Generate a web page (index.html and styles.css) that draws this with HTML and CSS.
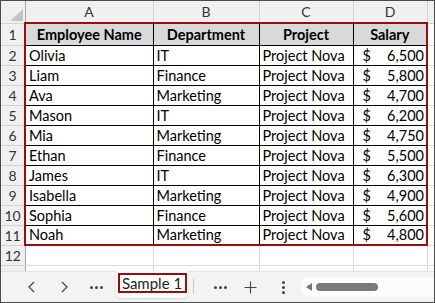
FILE: index.html
```html
<!DOCTYPE html>
<html>
<head>
<meta charset="utf-8">
<link rel="stylesheet" href="styles.css">
</head>
<body>
<div class="app">
  <div class="sheet">
    <table class="grid">
      <colgroup>
        <col class="c-rh"><col class="c-a"><col class="c-b"><col class="c-c"><col class="c-d"><col class="c-x">
      </colgroup>
      <thead>
        <tr class="colhead">
          <th class="corner"><svg class="tri" width="13" height="12" viewBox="0 0 13 12"><polygon points="13,0 13,12 0,12" fill="#c4c4c4"/></svg></th>
          <th>A</th><th>B</th><th>C</th><th>D</th><th></th>
        </tr>
      </thead>
      <tbody>
        <tr class="r1">
          <th class="rh">1</th>
          <td class="d hd top left">Employee Name</td>
          <td class="d hd top">Department</td>
          <td class="d hd top">Project</td>
          <td class="d hd top right">Salary</td>
          <td class="g"></td>
        </tr>
        <tr><th class="rh">2</th><td class="d left">Olivia</td><td class="d">IT</td><td class="d">Project Nova</td><td class="d right num"><div class="money"><span>$</span><span>6,500</span></div></td><td class="g"></td></tr>
        <tr><th class="rh">3</th><td class="d left">Liam</td><td class="d">Finance</td><td class="d">Project Nova</td><td class="d right num"><div class="money"><span>$</span><span>5,800</span></div></td><td class="g"></td></tr>
        <tr><th class="rh">4</th><td class="d left">Ava</td><td class="d">Marketing</td><td class="d">Project Nova</td><td class="d right num"><div class="money"><span>$</span><span>4,700</span></div></td><td class="g"></td></tr>
        <tr><th class="rh">5</th><td class="d left">Mason</td><td class="d">IT</td><td class="d">Project Nova</td><td class="d right num"><div class="money"><span>$</span><span>6,200</span></div></td><td class="g"></td></tr>
        <tr><th class="rh">6</th><td class="d left">Mia</td><td class="d">Marketing</td><td class="d">Project Nova</td><td class="d right num"><div class="money"><span>$</span><span>4,750</span></div></td><td class="g"></td></tr>
        <tr><th class="rh">7</th><td class="d left">Ethan</td><td class="d">Finance</td><td class="d">Project Nova</td><td class="d right num"><div class="money"><span>$</span><span>5,500</span></div></td><td class="g"></td></tr>
        <tr><th class="rh">8</th><td class="d left">James</td><td class="d">IT</td><td class="d">Project Nova</td><td class="d right num"><div class="money"><span>$</span><span>6,300</span></div></td><td class="g"></td></tr>
        <tr><th class="rh">9</th><td class="d left">Isabella</td><td class="d">Marketing</td><td class="d">Project Nova</td><td class="d right num"><div class="money"><span>$</span><span>4,900</span></div></td><td class="g"></td></tr>
        <tr><th class="rh">10</th><td class="d left">Sophia</td><td class="d">Finance</td><td class="d">Project Nova</td><td class="d right num"><div class="money"><span>$</span><span>5,600</span></div></td><td class="g"></td></tr>
        <tr><th class="rh">11</th><td class="d left bottom">Noah</td><td class="d bottom">Marketing</td><td class="d bottom">Project Nova</td><td class="d right bottom num"><div class="money"><span>$</span><span>4,800</span></div></td><td class="g"></td></tr>
        <tr><th class="rh">12</th><td class="g"></td><td class="g"></td><td class="g"></td><td class="g"></td><td class="g"></td></tr>
        <tr><th class="rh"></th><td class="g"></td><td class="g"></td><td class="g"></td><td class="g"></td><td class="g"></td></tr>
      </tbody>
    </table>
  </div>
  <div class="tabbar">
    <div class="btn w32"><svg width="10" height="12" viewBox="0 0 10 12"><polyline points="7,1 2,6 7,11" fill="none" stroke="#444" stroke-width="1.2"/></svg></div>
    <div class="btn w32"><svg width="10" height="12" viewBox="0 0 10 12"><polyline points="3,1 8,6 3,11" fill="none" stroke="#444" stroke-width="1.2"/></svg></div>
    <div class="btn w32"><span class="dots"><i></i><i></i><i></i></span></div>
    <div class="tab"><span class="tablabel">Sample 1</span></div>
    <div class="sep"></div>
    <div class="btn w30 more2"><span class="dots"><i></i><i></i><i></i></span></div>
    <div class="btn w30"><svg width="13" height="13" viewBox="0 0 13 13"><path d="M6.5 0.5v12M0.5 6.5h12" stroke="#444" stroke-width="1.1" fill="none"/></svg></div>
    <div class="btn w32 kebab"><span class="vdots"><i></i><i></i><i></i></span></div>
    <div class="track">
      <svg class="arrow" width="6" height="8" viewBox="0 0 6 8"><polygon points="6,0 6,8 0,4" fill="#777"/></svg>
      <div class="thumb"></div>
    </div>
  </div>
</div>
</body>
</html>
```

FILE: styles.css
```css
html, body {
  margin: 0;
  padding: 0;
}
body {
  width: 435px;
  height: 303px;
  overflow: hidden;
  background: #fff;
}
.app {
  box-sizing: border-box;
  width: 435px;
  height: 303px;
  border: 1px solid #4a4a4a;
  display: flex;
  flex-direction: column;
  font-family: Lato, "Liberation Sans", sans-serif;
  color: #000;
}
.sheet {
  height: 270px;
  overflow: hidden;
  background: #fff;
}
.grid {
  border-collapse: collapse;
  table-layout: fixed;
  width: 440px;
}
.c-rh { width: 24px; }
.c-a { width: 128px; }
.c-b { width: 106px; }
.c-c { width: 94px; }
.c-d { width: 74px; }
.c-x { width: 14px; }

.grid th, .grid td {
  padding: 0;
  overflow: hidden;
  white-space: nowrap;
}
.colhead th {
  height: 21px;
  background: #f0f0f0;
  border: 1px solid #d2d2d2;
  border-top: none;
  font-weight: normal;
  font-size: 14px;
  color: #333;
  text-align: center;
  vertical-align: middle;
}
.colhead th.corner {
  border-left: none;
  text-align: right;
  vertical-align: bottom;
  border-right-color: #a8a8a8;
}
.tri {
  display: block;
  margin: 0 2px 2px auto;
}
.rh {
  background: #f0f0f0;
  border: 1px solid #d2d2d2;
  border-left: none;
  border-right-color: #a8a8a8;
  font-weight: normal;
  font-size: 14px;
  color: #333;
  text-align: center;
}
.grid tbody tr { height: 20px; }
.grid tbody tr.r1 { height: 22px; }
.grid td {
  font-size: 14.5px;
  padding: 0 3px;
  vertical-align: middle;
}
.g {
  border: 1px solid #dadada;
}
.d {
  border: 1px solid #000;
}
.hd {
  background: #d9d9d9;
  font-weight: bold;
  text-align: center;
}
.top { border-top: 2px solid #9e0b0f; }
.bottom { border-bottom: 2px solid #9e0b0f; }
.left { border-left: 2px solid #9e0b0f; }
.right { border-right: 2px solid #9e0b0f; }
.grid td.num { padding: 0 2px 0 9px; }
.money {
  display: flex;
  justify-content: space-between;
}

.tabbar {
  flex: 1;
  background: #f3f3f3;
  border-top: 1px solid #e2e2e2;
  display: flex;
  align-items: flex-start;
  padding-left: 15px;
}
.btn {
  height: 30px;
  display: flex;
  align-items: center;
  justify-content: center;
}
.w32 { width: 32px; }
.w30 { width: 30px; }
.more2 { margin-left: 11px; }
.kebab { margin-left: 2px; }
.dots {
  display: flex;
  gap: 2px;
}
.dots i {
  width: 3px;
  height: 3px;
  border-radius: 50%;
  background: #444;
}
.vdots {
  display: flex;
  flex-direction: column;
  gap: 2px;
}
.vdots i {
  width: 3px;
  height: 3px;
  border-radius: 50%;
  background: #444;
}
.tab {
  margin-left: 4px;
  margin-top: -1px;
  width: 72px;
  height: 27px;
  background: #fff;
  border-radius: 0 0 5px 5px;
  box-shadow: 0 1px 2px rgba(0,0,0,0.12);
  display: flex;
  justify-content: center;
  align-items: flex-start;
}
.tablabel {
  margin-top: 2px;
  box-sizing: border-box;
  width: 69px;
  height: 20px;
  border: 2px solid #9e0b0f;
  font-size: 15px;
  color: #222;
  line-height: 16px;
  text-align: center;
}
.sep {
  width: 1px;
  height: 15px;
  margin: 7px 0 0 5px;
  background: #c8c8c8;
}
.track {
  margin: 5px 0 0 1px;
  flex: 1;
  height: 20px;
  border-radius: 10px 0 0 10px;
  background: #fbfbfb;
  display: flex;
  align-items: center;
  padding-left: 6px;
}
.arrow { display: block; }
.thumb {
  margin-left: 4px;
  width: 62px;
  height: 8px;
  border-radius: 4px;
  background: #7a7a7a;
}
```
